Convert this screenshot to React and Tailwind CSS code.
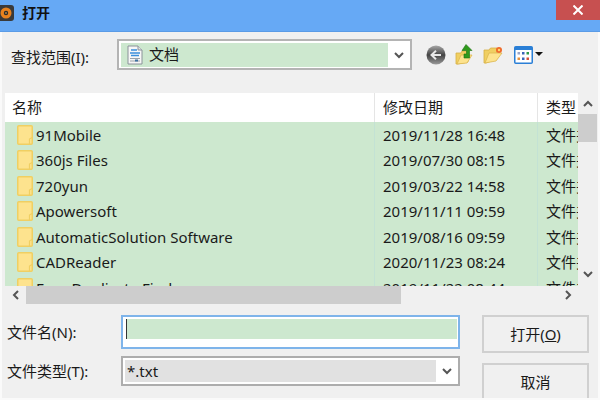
const rows = [
  ["91Mobile", "2019/11/28 16:48"],
  ["360js Files", "2019/07/30 08:15"],
  ["720yun", "2019/03/22 14:58"],
  ["Apowersoft", "2019/11/11 09:59"],
  ["AutomaticSolution Software", "2019/08/16 09:59"],
  ["CADReader", "2020/11/23 08:24"],
  ["Easy Duplicate Finder", "2019/11/22 08:44"],
];

const Chevron = ({ dir = "down", className = "" }) => {
  const d = {
    down: "M2 4 L6 8 L10 4",
    up: "M2 8 L6 4 L10 8",
    left: "M8 2 L4 6 L8 10",
    right: "M4 2 L8 6 L4 10",
  }[dir];
  return (
    <svg width="12" height="12" viewBox="0 0 12 12" className={className}>
      <path d={d} fill="none" stroke="#555" strokeWidth="2" />
    </svg>
  );
};

const Folder = () => (
  <svg width="16" height="20" viewBox="0 0 16 20" className="shrink-0">
    <rect x="0.75" y="0.75" width="14.5" height="18.5" rx="1" fill="#fde38e" stroke="#f0cf62" strokeWidth="1.5" />
    <path d="M12.5 19 V14 L15 12.5" fill="none" stroke="#f0cf62" strokeWidth="1.2" />
  </svg>
);

const AppIcon = () => (
  <svg width="14" height="18" viewBox="0 0 14 18" className="shrink-0">
    <rect x="-4" y="1" width="18" height="16" rx="3" fill="#3a3a3a" />
    <circle cx="6" cy="9" r="5.5" fill="#e8821e" />
    <circle cx="6" cy="9" r="2.2" fill="#2b2b2b" />
    <circle cx="6" cy="9" r="0.8" fill="#f6c06a" />
  </svg>
);

const DocIcon = () => (
  <svg width="16" height="20" viewBox="0 0 16 20" className="shrink-0">
    <path d="M1 1 H11 L15 5 V19 H1 Z" fill="#f7f7f7" stroke="#8a9299" />
    <path d="M11 1 V5 H15" fill="#dfe3e6" stroke="#8a9299" />
    <path d="M4 5 H10 M3 8 H13 M4 10.5 H12" stroke="#3b8fdc" strokeWidth="1.3" />
    <path d="M3 13.5 H13 M3 16 H13" stroke="#9aa2a8" />
    <rect x="8" y="14.5" width="3" height="2" fill="#3b6fa0" />
  </svg>
);

const BackIcon = () => (
  <svg width="20" height="20" viewBox="0 0 20 20">
    <defs>
      <linearGradient id="back" x1="0" y1="0" x2="0" y2="1">
        <stop offset="0" stopColor="#a8a8a8" />
        <stop offset="0.5" stopColor="#444" />
        <stop offset="1" stopColor="#9a9a9a" />
      </linearGradient>
    </defs>
    <circle cx="10" cy="10" r="9.5" fill="url(#back)" />
    <path d="M15 10 H6 M10 5.8 L5.5 10 L10 14.2" fill="none" stroke="#e8e8e8" strokeWidth="2" />
  </svg>
);

const UpIcon = () => (
  <svg width="20" height="21" viewBox="0 0 20 21">
    <path d="M1 9 H6 L7 7 H13 V18 L3 20 H1 Z" fill="#f0cf62" stroke="#d6ae45" strokeWidth="0.8" />
    <path d="M2 20 L6 11 H17 L12 19 Z" fill="#fde38e" stroke="#dcb750" strokeWidth="0.8" />
    <path d="M11 0.5 L17 6.5 H14.5 V14 H9 V10 H11.5 V6.5 H7 Z" fill="#2f9a1c" stroke="#1d6f10" strokeWidth="0.6" />
  </svg>
);

const NewFolderIcon = () => (
  <svg width="20" height="18" viewBox="0 0 20 18">
    <path d="M1 4 H6 L7.5 2 H14 V13 L3 17 H1 Z" fill="#f0cf62" stroke="#d6ae45" strokeWidth="0.8" />
    <path d="M2 17 L6 7 H19 L13 15 Z" fill="#fde38e" stroke="#dcb750" strokeWidth="0.8" />
    <circle cx="16" cy="4" r="3" fill="#ef6a2a" />
    <circle cx="16" cy="4" r="1.2" fill="#ffd76b" />
  </svg>
);

const ViewIcon = () => (
  <svg width="30" height="18" viewBox="0 0 30 18">
    <rect x="0.75" y="0.75" width="17.5" height="16.5" rx="1" fill="#fff" stroke="#2a7fd6" strokeWidth="1.5" />
    <rect x="1" y="1" width="17" height="3" fill="#2a7fd6" />
    <rect x="3.5" y="6" width="2.5" height="2.5" fill="#9aa5c8" />
    <rect x="8" y="6" width="2.5" height="2.5" fill="#3a64b8" />
    <rect x="12.5" y="6" width="2.5" height="2.5" fill="#2f9a4a" />
    <rect x="3.5" y="11.5" width="2.5" height="2.5" fill="#e8923a" />
    <rect x="8" y="11.5" width="2.5" height="2.5" fill="#3a64b8" />
    <rect x="12.5" y="11.5" width="2.5" height="2.5" fill="#d8503a" />
    <path d="M21 6 H29 L25 10 Z" fill="#111" />
  </svg>
);

export default function App() {
  return (
    <div className="w-[600px] h-[400px] overflow-hidden flex flex-col bg-[#f0f0f0] text-[15px] text-[#1a1a1a] font-['Noto_Sans','Noto_Sans_CJK_SC',sans-serif]">
      {/* title bar */}
      <header className="h-[32px] shrink-0 flex bg-[#66a9f5] border-b border-[#5a9be6]">
        <div className="flex items-center gap-[8px] h-[25px]">
          <AppIcon />
          <span className="text-[14px] font-bold text-[#111]">打开</span>
        </div>
        <div className="ml-auto w-[44px] h-[20px] bg-[#c75050] flex items-center justify-center">
          <svg width="10" height="10" viewBox="0 0 10 10">
            <path d="M0.5 0.5 L9.5 9.5 M9.5 0.5 L0.5 9.5" stroke="#fff" strokeWidth="2" />
          </svg>
        </div>
      </header>

      <div className="flex-1 flex flex-col border-l-2 border-r-2 border-b-2 border-[#fafafa] overflow-hidden">
        {/* look in row */}
        <div className="h-[61px] shrink-0 flex pt-[7px] pl-[9px]">
          <label className="w-[106px] h-[37px] flex items-center">查找范围(I):</label>
          <div className="w-[295px] h-[31px] border-2 border-[#b4b4b4] bg-white flex items-center pl-[2px]">
            <div className="w-[267px] h-[24px] bg-[#cde8cf] flex items-center gap-[6px] pl-[6px]">
              <DocIcon />
              <span>文档</span>
            </div>
            <div className="flex-1 flex justify-center">
              <Chevron />
            </div>
          </div>
          <div className="flex items-center h-[31px] ml-[14px]">
            <BackIcon />
            <div className="ml-[9px]"><UpIcon /></div>
            <div className="ml-[8px]"><NewFolderIcon /></div>
            <div className="ml-[11px]"><ViewIcon /></div>
          </div>
        </div>

        {/* file list */}
        <div className="h-[193px] shrink-0 flex pl-[3px]">
          <div className="w-[573px] flex flex-col overflow-hidden">
            <div className="h-[29px] shrink-0 flex bg-white items-center">
              <div className="w-[370px] h-full border-r border-[#e5e5e5] pl-[7px] flex items-center">名称</div>
              <div className="w-[163px] h-full border-r border-[#e5e5e5] pl-[8px] flex items-center">修改日期</div>
              <div className="w-[40px] h-full pl-[8px] flex items-center overflow-hidden whitespace-nowrap">类型</div>
            </div>
            <div className="flex-1 overflow-hidden bg-[#cde8cf] flex flex-col">
              {rows.map(([name, date]) => (
                <div key={name} className="h-[25.5px] shrink-0 flex items-center">
                  <div className="w-[370px] h-full border-r border-[#c3e2d4] pl-[12px] flex items-center gap-[3px]">
                    <Folder />
                    <span className="whitespace-nowrap">{name}</span>
                  </div>
                  <div className="w-[163px] h-full border-r border-[#c3e2d4] pl-[8px] flex items-center whitespace-nowrap">{date}</div>
                  <div className="w-[40px] h-full pl-[8px] flex items-center overflow-hidden whitespace-nowrap">文件夹</div>
                </div>
              ))}
            </div>
          </div>
          <div className="w-[19px] flex flex-col">
            <div className="h-[21px] flex items-center justify-center">
              <Chevron dir="up" />
            </div>
            <div className="h-[28px] bg-[#cdcdcd]" />
            <div className="flex-1 flex items-end justify-center pb-[6px]">
              <Chevron dir="down" />
            </div>
          </div>
        </div>

        {/* horizontal scrollbar */}
        <div className="h-[18px] shrink-0 flex pl-[3px]">
          <div className="w-[21px] flex items-center justify-center">
            <Chevron dir="left" />
          </div>
          <div className="w-[375px] bg-[#cdcdcd]" />
          <div className="w-[173px] flex items-center justify-end">
            <Chevron dir="right" />
          </div>
        </div>

        {/* file name and type */}
        <div className="flex-1 flex pt-[11px] pl-[5px]">
          <div className="w-[453px] flex flex-col">
            <div className="h-[34px] flex items-center">
              <label className="w-[114px] shrink-0">文件名(N):</label>
              <div className="w-[339px] h-full border-2 border-[#7eb4ea] bg-white pl-[1px] pt-[2px] pr-[1px]">
                <div className="h-[20px] bg-[#cde8cf] border-l border-[#333] ml-[2px]" />
              </div>
            </div>
            <div className="h-[30px] mt-[7px] flex items-center">
              <label className="w-[114px] shrink-0">文件类型(T):</label>
              <div className="w-[339px] h-full border-2 border-[#adadad] bg-white flex items-center pl-[2px]">
                <div className="w-[311px] h-[22px] bg-[#e1e1e1] flex items-center pl-[2px]">*.txt</div>
                <div className="flex-1 flex justify-center">
                  <Chevron />
                </div>
              </div>
            </div>
          </div>
          <div className="ml-[22px] w-[107px] flex flex-col gap-[10px]">
            <button className="h-[38px] shrink-0 border-2 border-[#d0d0d0] bg-[#f0f0f0]">
              打开(<span className="underline">O</span>)
            </button>
            <button className="h-[38px] shrink-0 border-2 border-[#d0d0d0] bg-[#f0f0f0]">取消</button>
          </div>
        </div>
      </div>
    </div>
  );
}
